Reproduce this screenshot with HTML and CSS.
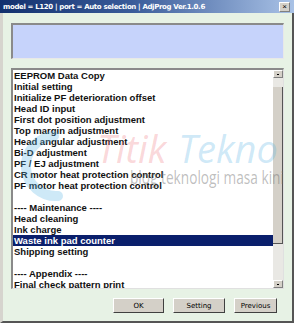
FILE: index.html
```html
<!DOCTYPE html>
<html>
<head>
<meta charset="utf-8">
<link rel="stylesheet" href="styles.css">
</head>
<body>
<div class="window">
  <div class="titlebar">
    <span class="title">model = L120 | port = Auto selection | AdjProg Ver.1.0.6</span>
    <span class="close">&#215;</span>
  </div>
  <div class="body">
    <div class="info"></div>
    <div class="listbox">
      <ul class="list">
        <li>EEPROM Data Copy</li>
        <li>Initial setting</li>
        <li>Initialize PF deterioration offset</li>
        <li>Head ID input</li>
        <li>First dot position adjustment</li>
        <li>Top margin adjustment</li>
        <li>Head angular adjustment</li>
        <li>Bi-D adjustment</li>
        <li>PF / EJ adjustment</li>
        <li>CR motor heat protection control</li>
        <li>PF motor heat protection control</li>
        <li>&nbsp;</li>
        <li>---- Maintenance ----</li>
        <li>Head cleaning</li>
        <li>Ink charge</li>
        <li class="selected">Waste ink pad counter</li>
        <li>Shipping setting</li>
        <li>&nbsp;</li>
        <li>---- Appendix ----</li>
        <li>Final check pattern print</li>
      </ul>
      <div class="scrollbar">
        <div class="arrow up"></div>
        <div class="track-a"></div>
        <div class="thumb"></div>
        <div class="track-b"></div>
        <div class="arrow down"></div>
      </div>
    </div>
    <div class="buttons">
      <button class="btn btn-ok">OK</button>
      <button class="btn btn-setting">Setting</button>
      <button class="btn btn-prev">Previous</button>
    </div>
  </div>
  <div class="watermark">
    <svg class="wm-logo" width="60" height="76" viewBox="0 0 60 76">
      <path d="M42 8 A30 30 0 1 0 46 68" fill="none" stroke="#5fb8e8" stroke-width="10" stroke-linecap="round"/>
    </svg>
    <div class="wm-title"><span class="wm-pink">Titik</span> <span class="wm-blue">Tekno</span></div>
    <div class="wm-sub">blog teknologi masa kini</div>
  </div>
</div>
</body>
</html>
```
FILE: styles.css
```css
html, body {
  margin: 0;
  padding: 0;
  background: #ffffff;
}
.window {
  position: relative;
  width: 294px;
  height: 323px;
  display: flex;
  flex-direction: column;
  font-family: "Liberation Sans", Arial, sans-serif;
  overflow: hidden;
}
.titlebar {
  height: 13px;
  flex: none;
  display: flex;
  align-items: center;
  justify-content: space-between;
  background: linear-gradient(to right, #12306e 0%, #3a5c9a 45%, #a9c2e6 100%);
  padding: 0 4px 0 3px;
}
.title {
  color: #ffffff;
  font-family: "DejaVu Sans", sans-serif;
  font-weight: bold;
  font-size: 7px;
  letter-spacing: -0.35px;
  white-space: nowrap;
}
.close {
  width: 9px;
  height: 8px;
  background: #d4d0c8;
  border: 1px solid #808080;
  border-top-color: #ffffff;
  border-left-color: #ffffff;
  font-size: 8px;
  line-height: 8px;
  text-align: center;
  color: #000;
}
.body {
  flex: 1;
  display: flex;
  flex-direction: column;
  background: #e7f2e5;
  border-left: 3px solid #d6d4ce;
  border-right: 2px solid #555555;
  border-bottom: 2px solid #555555;
  padding: 10px 8px 0 8px;
}
.info {
  height: 33px;
  flex: none;
  background: #c6d3fb;
  border-top: 2px solid #8a8a8a;
  border-left: 2px solid #8a8a8a;
  border-right: 1px solid #e8e8e8;
  border-bottom: 1px solid #e8e8e8;
}
.listbox {
  margin-top: 9px;
  height: 218px;
  flex: none;
  display: flex;
  background: #ffffff;
  border-top: 2px solid #8a8a8a;
  border-left: 2px solid #8a8a8a;
  border-right: 1px solid #e0e0e0;
  border-bottom: 1px solid #e0e0e0;
  overflow: hidden;
}
.list {
  list-style: none;
  margin: 0;
  padding: 0;
  flex: 1;
  font-size: 9.5px;
  font-weight: bold;
  color: #111;
}
.list li {
  height: 11px;
  line-height: 11px;
  padding-left: 1px;
  white-space: nowrap;
}
.list li.selected {
  background: #0a1f6c;
  color: #ffffff;
}
.scrollbar {
  width: 10px;
  flex: none;
  display: flex;
  flex-direction: column;
  background: #e9e8e4;
}
.arrow {
  height: 8px;
  background: #d4d0c8;
  border: 1px solid #808080;
  border-top-color: #fff;
  border-left-color: #fff;
  box-sizing: border-box;
  position: relative;
}
.arrow::after {
  content: "";
  position: absolute;
  left: 3px;
  top: 3px;
  width: 2px;
  height: 1px;
  background: #000;
}
.track-a { height: 9px; }
.thumb {
  height: 157px;
  background: #d4d0c8;
  border-right: 1px solid #555;
  border-bottom: 1px solid #555;
  box-sizing: border-box;
}
.track-b { flex: 1; }
.buttons {
  display: flex;
  justify-content: flex-end;
  gap: 9px;
  margin-top: 9px;
  padding-right: 7px;
}
.btn {
  height: 15px;
  padding: 0;
  background: #d4d0c8;
  border: 1px solid #404040;
  border-top-color: #ffffff;
  border-left-color: #ffffff;
  font-family: "DejaVu Sans", sans-serif;
  font-size: 7px;
  color: #000;
}
.btn-ok { width: 51px; }
.btn-setting { width: 52px; }
.btn-prev { width: 43px; }
.watermark {
  position: absolute;
  left: 0;
  top: 0;
  width: 100%;
  height: 100%;
  pointer-events: none;
}
.wm-logo {
  position: absolute;
  left: 12px;
  top: 128px;
  opacity: 0.3;
}
.wm-title {
  position: absolute;
  left: 97px;
  top: 128px;
  font-family: "Open Sans", sans-serif;
  font-style: italic;
  font-size: 38px;
  line-height: 40px;
  letter-spacing: 0;
  word-spacing: 2px;
  white-space: nowrap;
}
.wm-pink { color: rgba(240, 120, 130, 0.3); }
.wm-blue { color: rgba(90, 180, 230, 0.3); }
.wm-sub {
  position: absolute;
  left: 130px;
  top: 166px;
  font-family: "Open Sans", sans-serif;
  font-size: 19px;
  line-height: 22px;
  color: rgba(110, 110, 110, 0.45);
  white-space: nowrap;
  transform: scaleX(0.72);
  transform-origin: left top;
}
```
